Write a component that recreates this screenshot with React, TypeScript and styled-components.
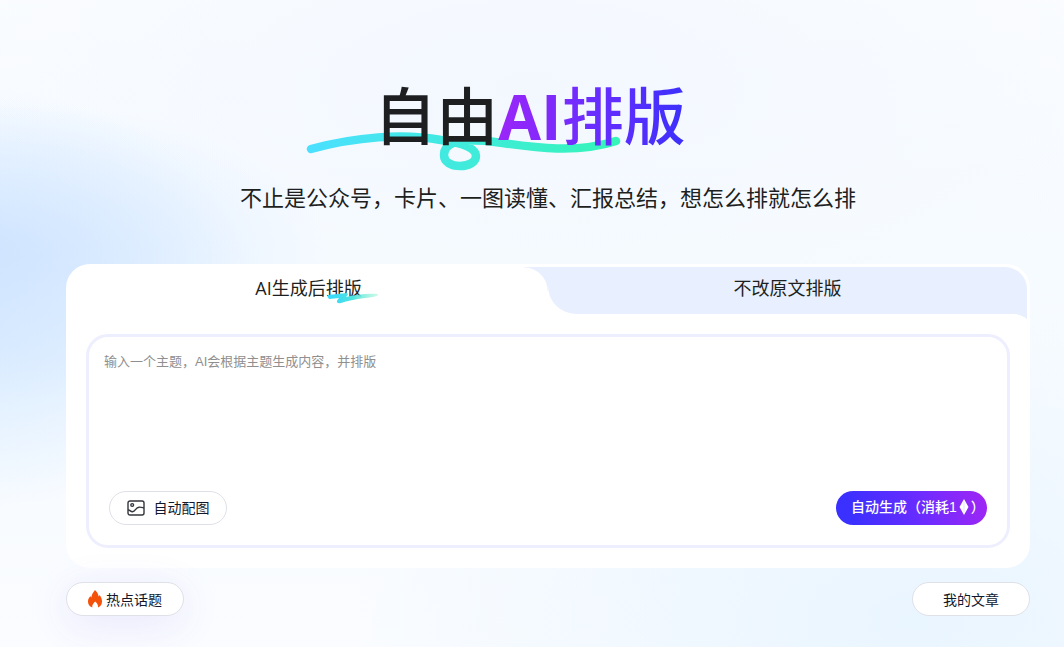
import React, { useState } from "react";
import styled, { createGlobalStyle } from "styled-components";

const GlobalStyle = createGlobalStyle`
  *, *::before, *::after { box-sizing: border-box; }
  body {
    margin: 0;
    font-family: "Open Sans", "Noto Sans CJK SC", sans-serif;
    color: #1d1f21;
  }
  button, textarea { font: inherit; color: inherit; }
`;

const Page = styled.main`
  min-height: 100vh;
  padding: 76px 34px 30px 66px;
  overflow: hidden;
  background:
    radial-gradient(ellipse 350px 150px at -20px 250px, rgba(206, 227, 255, 0.9), rgba(210, 230, 255, 0.5) 40%, rgba(225, 240, 255, 0) 100%),
    radial-gradient(ellipse 280px 210px at -20px 300px, rgba(208, 230, 255, 0.9), rgba(214, 234, 255, 0.6) 50%, rgba(232, 245, 255, 0) 100%),
    radial-gradient(ellipse 560px 330px at 86% 96%, rgba(233, 245, 255, 1), rgba(238, 248, 255, 0) 100%),
    radial-gradient(ellipse 620px 260px at 50% 14%, rgba(243, 248, 255, 1), rgba(245, 250, 255, 0) 100%),
    linear-gradient(180deg, #fafcff 0%, #f6fbff 40%, #fafcff 100%);
`;

const Header = styled.header`
  display: flex;
  flex-direction: column;
  align-items: center;
`;

const Title = styled.h1`
  position: relative;
  margin: 0 36px 0 0;
  font-size: 62px;
  line-height: 80px;
  font-weight: 500;
  white-space: nowrap;
`;

const TitleText = styled.span`
  position: relative;
`;

const TitleAccent = styled.span`
  position: relative;
  background: linear-gradient(90deg, #9b26f8 0%, #6a2dff 50%, #3b30fb 100%);
  background-clip: text;
  -webkit-background-clip: text;
  color: transparent;
`;

const Swash = styled.svg`
  position: absolute;
  left: -69px;
  top: 52px;
`;

const Subtitle = styled.p`
  margin: 23px 0 0;
  font-size: 22px;
  line-height: 36px;
`;

const Card = styled.section`
  margin-top: 49px;
  border-radius: 24px;
  background: #fff;
`;

const Tabs = styled.div`
  display: grid;
  grid-template-columns: 1fr 1fr;
  height: 50px;
  padding: 3px 3px 0 3px;
`;

const Tab = styled.button<{ $active?: boolean }>`
  position: relative;
  border: 0;
  padding: 0 0 6px;
  font-size: 18px;
  line-height: 28px;
  cursor: pointer;
  background: ${(p) => (p.$active ? "#fff" : "#e8effe")};
  border-radius: ${(p) => (p.$active ? "24px 0 0 0" : "0 22px 0 28px")};

  &::after {
    content: "";
    display: ${(p) => (p.$active ? "block" : "none")};
    position: absolute;
    top: 0;
    right: 0;
    width: 24px;
    height: 24px;
    background: radial-gradient(circle at 0 100%, #fff 23px, #e8effe 24px);
  }
`;

const TabLabel = styled.span`
  position: relative;
`;

const Latin = styled.span`
  font-weight: 500;
`;

const TabMark = styled.svg`
  position: absolute;
  right: -17px;
  bottom: -4px;
`;

const CardBody = styled.div`
  position: relative;
  padding: 20px;

  &::before {
    content: "";
    position: absolute;
    top: 0;
    right: 3px;
    width: 20px;
    height: 9px;
    background: radial-gradient(ellipse 22px 10px at 0 100%, #fff 96%, #e8effe 100%);
  }
`;

const Editor = styled.div`
  display: flex;
  flex-direction: column;
  min-height: 214px;
  padding: 15px 20px 20px 15px;
  border: 3px solid #eeeffe;
  border-radius: 22px;
  font-family: "Liberation Sans", "Noto Sans CJK SC", sans-serif;
`;

const Prompt = styled.textarea`
  flex: 1;
  border: 0;
  padding: 0;
  resize: none;
  outline: 0;
  background: transparent;
  font-size: 13px;
  line-height: 20px;

  &::placeholder { color: #8f8f8f; opacity: 1; }
`;

const Row = styled.div`
  display: flex;
  align-items: center;
  justify-content: space-between;
`;

const EditorRow = styled(Row)`
  padding-left: 5px;
`;

const FooterRow = styled(Row)`
  margin-top: 14px;
  font-family: "Noto Sans CJK SC", sans-serif;
`;

const Pill = styled.button<{ $glow?: boolean; $gap?: number }>`
  display: flex;
  align-items: center;
  justify-content: center;
  gap: ${(p) => p.$gap ?? 4}px;
  width: 118px;
  height: 34px;
  padding: 0;
  border: 1px solid #dfe1e8;
  border-radius: 17px;
  background: #fff;
  color: #12182b;
  font-size: 14px;
  line-height: 20px;
  white-space: nowrap;
  cursor: pointer;
  box-shadow: ${(p) => (p.$glow ? "0 8px 40px rgba(110, 70, 230, 0.12)" : "none")};
`;

const Generate = styled(Pill)`
  justify-content: flex-start;
  width: 151px;
  gap: 0;
  padding: 0 0 2px 15px;
  border: 0;
  background: linear-gradient(75deg, #3a30ff 10%, #6a2cff 55%, #a126f4 100%);
  color: #fff;
  font-weight: 500;
`;

export default function App() {
  const [tab, setTab] = useState(0);
  return (
    <>
      <GlobalStyle />
      <Page>
        <Header>
          <Title>
            <Swash width="318" height="46" viewBox="0 0 318 46" fill="none" aria-hidden="true">
              <defs>
                <linearGradient id="swash" x1="0" y1="0" x2="1" y2="0">
                  <stop offset="0" stopColor="#4be0ff" />
                  <stop offset="1" stopColor="#35f5b8" />
                </linearGradient>
              </defs>
              <path
                d="M6 21C50 9 98 5 136 12C158 15 171 20 171 28C171 34 164 38 155 38C146 38 139 34 139 27C139 21 143 17 148 15C158 12 176 12 190 14C220 18 268 27 311 13"
                stroke="url(#swash)"
                strokeWidth="8.500"
                strokeLinecap="round"
              />
            </Swash>
            <TitleText>自由</TitleText>
            <TitleAccent>
              <b>AI</b>排版
            </TitleAccent>
          </Title>
          <Subtitle>不止是公众号，卡片、一图读懂、汇报总结，想怎么排就怎么排</Subtitle>
        </Header>

        <Card>
          <Tabs role="tablist">
            <Tab $active role="tab" aria-selected={tab === 0} onClick={() => setTab(0)}>
              <TabLabel>
                <Latin>AI</Latin>生成后排版
                <TabMark width="52" height="12" viewBox="0 0 52 12" fill="none" aria-hidden="true">
                  <defs>
                    <linearGradient id="mark" x1="0" y1="0" x2="1" y2="0">
                      <stop offset="0" stopColor="#35d8ff" />
                      <stop offset="0.5" stopColor="#4fe3e0" />
                      <stop offset="1" stopColor="#9af5d0" stopOpacity="0.5" />
                    </linearGradient>
                  </defs>
                  <path d="M1 3L20 1Q22 2 19 5C28 3 40 1 51 2C52 5 44 5 38 6C28 7 20 9 14 11C9 12 9 9 12 6L2 7Q0 5 1 3Z" fill="url(#mark)" />
                </TabMark>
              </TabLabel>
            </Tab>
            <Tab role="tab" aria-selected={tab === 1} onClick={() => setTab(1)}>
              不改原文排版
            </Tab>
          </Tabs>
          <CardBody>
            <Editor>
              <Prompt aria-label="主题" placeholder="输入一个主题，AI会根据主题生成内容，并排版" />
              <EditorRow>
                <Pill $gap={9}>
                  <svg width="18" height="16" viewBox="0 0 18 16" fill="none" stroke="#33363d" strokeWidth="1.4" aria-hidden="true">
                    <rect x="1" y="1" width="16" height="14" rx="2" />
                    <circle cx="5.200" cy="5" r="1.400" />
                    <path d="M1 10C3 9.500 3.500 12 5.500 11.800C8.500 11.500 8.500 7.500 12 7.200C14 7 15 7.500 17 8" />
                  </svg>
                  自动配图
                </Pill>
                <Generate>
                  自动生成（消耗1
                  <svg width="14" height="16" viewBox="0 0 14 16" fill="#fff" aria-hidden="true">
                    <path d="M7 0L11.500 8L7 16L2.500 8Z" />
                    <path d="M7 3V13" stroke="#d9c8ff" strokeWidth="0.6" />
                  </svg>
                  ）
                </Generate>
              </EditorRow>
            </Editor>
          </CardBody>
        </Card>

        <FooterRow>
          <Pill $glow>
            <svg width="14" height="18" viewBox="0 0 14 18" aria-hidden="true">
              <path
                d="M7 0C9 2 10.500 4 10.500 6.500C11.200 6.200 11.500 5.600 11.500 5C13.200 7 14 9 14 11.500C14 14.500 12.500 16.500 10 17.500C10.500 15 9 13 7.200 11.500C5.500 13 3.800 15 4.300 17.500C1.500 16.500 0 14.500 0 11.500C0 9 1 7.500 2.500 6C2.600 6.800 2.900 7.200 3.400 7.500C3.400 5 5 2.500 7 0Z"
                fill="#f4510b"
              />
            </svg>
            热点话题
          </Pill>
          <Pill>我的文章</Pill>
        </FooterRow>
      </Page>
    </>
  );
}
